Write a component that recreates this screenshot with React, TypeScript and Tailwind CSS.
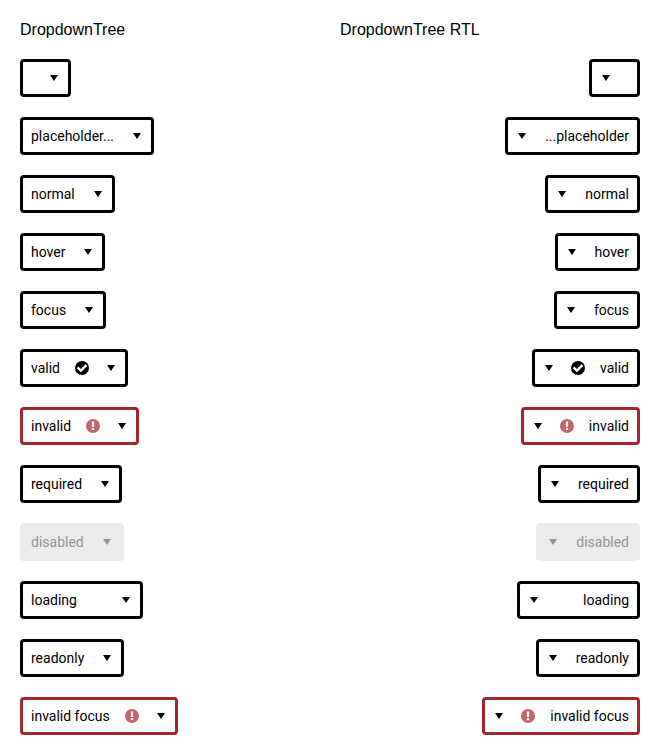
type Item = { text: string; w: string; state?: "valid" | "invalid" | "disabled" };

const items: Item[] = [
  { text: "", w: "w-[51px]" },
  { text: "placeholder...", w: "w-[134px] rtl:w-[135px]" },
  { text: "normal", w: "w-[95px]" },
  { text: "hover", w: "w-[85px]" },
  { text: "focus", w: "w-[86px]" },
  { text: "valid", w: "w-[108px]", state: "valid" },
  { text: "invalid", w: "w-[119px]", state: "invalid" },
  { text: "required", w: "w-[102px]" },
  { text: "disabled", w: "w-[104px]", state: "disabled" },
  { text: "loading", w: "w-[123px]" },
  { text: "readonly", w: "w-[104px]" },
  { text: "invalid focus", w: "w-[158px]", state: "invalid" },
];

function Caret() {
  return (
    <svg width="8" height="6" viewBox="0 0 8 6" className="mx-[5px] shrink-0">
      <path d="M0 0h8L4 6z" fill="currentColor" />
    </svg>
  );
}

function Status({ state }: { state: "valid" | "invalid" }) {
  return (
    <svg width="14" height="14" viewBox="0 0 14 14" className="ms-auto shrink-0">
      <circle cx="7" cy="7" r="7" fill={state === "valid" ? "#000" : "#c4666b"} />
      {state === "valid" ? (
        <path d="M2.5 6.3 5.9 9.6l5.6-5.4" stroke="#fff" strokeWidth="2.3" fill="none" />
      ) : (
        <path d="M5.9 2.6h2.2v5.3H5.9zM5.9 9h2.2v2H5.9z" fill="#fff" />
      )}
    </svg>
  );
}

function Dropdown({ item }: { item: Item }) {
  const tone =
    item.state === "invalid"
      ? "border-[#a4262c] text-black"
      : item.state === "disabled"
        ? "border-[#ebebea] bg-[#ebebea] text-[#979593]"
        : "border-black text-black";
  const hasStatus = item.state === "valid" || item.state === "invalid";
  return (
    <div className={`flex h-[38px] items-center rounded-[4px] border-[3px] ps-2 pe-[5px] ${item.w} ${tone}`}>
      <span className="whitespace-nowrap text-sm leading-5">{item.text}</span>
      {(item.state === "valid" || item.state === "invalid") && <Status state={item.state} />}
      <span className={hasStatus ? "ms-[13px]" : "ms-auto"}>
        <Caret />
      </span>
    </div>
  );
}

export default function App() {
  return (
    <main className="grid h-[755px] w-[660px] grid-cols-[300px_300px] gap-x-5 bg-white px-5 pt-5 font-[Roboto,sans-serif] text-black">
      <section>
        <h2 className="mb-[19px] h-5 font-['Liberation_Sans',Arial,sans-serif] text-base leading-5">DropdownTree</h2>
        <div className="flex flex-col items-start gap-5">
          {items.map((item, i) => <Dropdown key={i} item={item} />)}
        </div>
      </section>
      <section>
        <h2 className="mb-[19px] h-5 font-['Liberation_Sans',Arial,sans-serif] text-base leading-5">DropdownTree RTL</h2>
        <div dir="rtl" className="flex flex-col items-start gap-5">
          {items.map((item, i) => <Dropdown key={i} item={item} />)}
        </div>
      </section>
    </main>
  );
}
